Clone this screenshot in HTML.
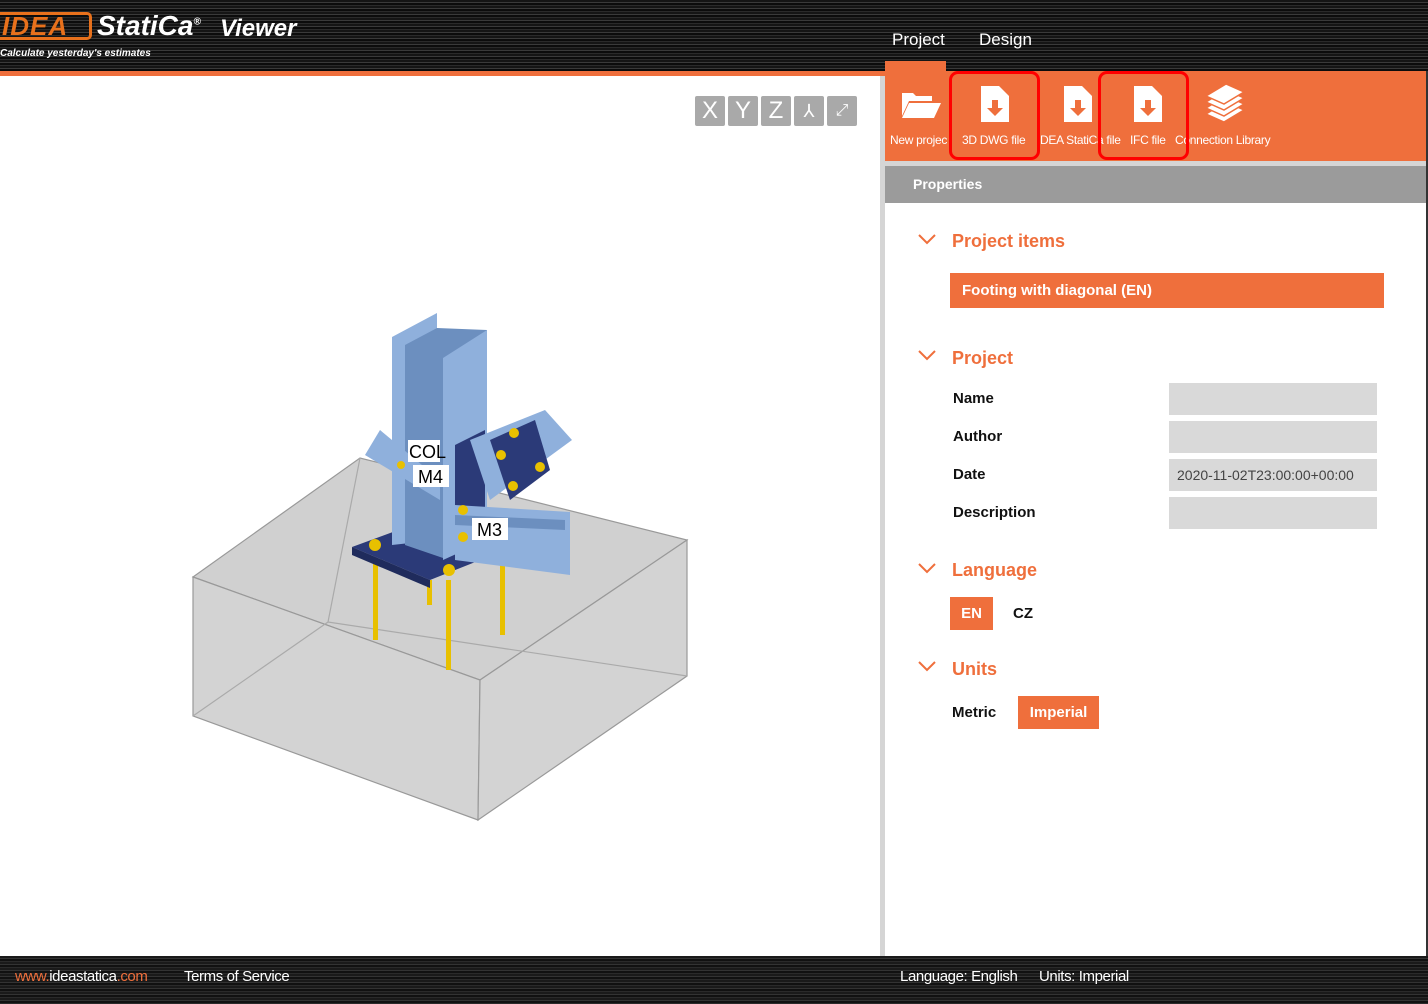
<!DOCTYPE html>
<html><head><meta charset="utf-8"><style>
*{margin:0;padding:0;box-sizing:border-box}
body{width:1428px;height:1004px;overflow:hidden;background:#fff;font-family:"Liberation Sans",sans-serif;position:relative}
.hdr{position:absolute;left:0;top:0;width:1428px;height:71px;background:repeating-linear-gradient(180deg,#151515 0 2px,#3a3a3a 2px 3px,#0c0c0c 3px 5px,#2a2a2a 5px 6px)}
.abs{position:absolute}
.o{color:#ef6f3c}
.tb{position:absolute;left:885px;top:71px;width:541px;height:90px;background:#ef6f3c}
.tl{position:absolute;top:133px;font-size:12px;color:#fff;white-space:nowrap;letter-spacing:-0.3px}
.red{position:absolute;border:3px solid #f00;border-radius:9px}
.lbl{position:absolute;font-size:15px;font-weight:bold;color:#111}
.fld{position:absolute;left:1169px;width:208px;height:32px;background:#d9d9d9;font-size:14px;color:#444;padding:8px 8px}
.sec{position:absolute;left:952px;font-size:18px;font-weight:bold;color:#ef6f3c}
.chev{position:absolute;left:918px;width:18px;height:18px}
.vb{position:absolute;top:96px;width:30px;height:30px;background:#a9a9a9;color:#fff;font-size:24px;text-align:center;line-height:30px;border-radius:2px}
</style></head><body>
<div class="hdr"></div>
<div class="abs" style="left:0;top:71px;width:885px;height:5px;background:#ef6f3c"></div>
<div class="abs" style="left:0;top:12px;width:92px;height:28px;border:3px solid #e8711c;border-left:none;border-radius:0 5px 5px 0;color:#e8711c;font-weight:bold;font-style:italic;font-size:26px;line-height:22px;padding-left:2px;letter-spacing:1px">IDEA</div>
<div class="abs" style="left:97px;top:10px;color:#fff;font-weight:bold;font-style:italic;font-size:28px">StatiCa<sup style="font-size:10px">®</sup></div>
<div class="abs" style="left:220px;top:15px;color:#fff;font-weight:bold;font-style:italic;font-size:24px">Viewer</div>
<div class="abs" style="left:0;top:48px;color:#fff;font-weight:bold;font-style:italic;font-size:10px">Calculate yesterday's estimates</div>
<div class="abs" style="left:885px;top:61px;width:61px;height:12px;background:#ef6f3c"></div>
<div class="abs" style="left:892px;top:30px;color:#fff;font-size:17px">Project</div>
<div class="abs" style="left:979px;top:30px;color:#fff;font-size:17px">Design</div>
<div class="tb"></div>
<svg class="abs" style="left:900px;top:88px" width="42" height="34" viewBox="0 0 42 34"><path d="M2 5h11l3 3h16v5H9L2 28z" fill="#fff"/><path d="M9 15h32l-7 15H2z" fill="#fff"/></svg>
<svg class="abs" style="left:979px;top:84px" width="32" height="40" viewBox="0 0 32 40"><path d="M2 2h18l10 10v26H2z" fill="#fff"/><path d="M13 16h6v8h5l-8 8-8-8h5z" fill="#ef6f3c"/></svg>
<svg class="abs" style="left:1062px;top:84px" width="32" height="40" viewBox="0 0 32 40"><path d="M2 2h18l10 10v26H2z" fill="#fff"/><path d="M13 16h6v8h5l-8 8-8-8h5z" fill="#ef6f3c"/></svg>
<svg class="abs" style="left:1132px;top:84px" width="32" height="40" viewBox="0 0 32 40"><path d="M2 2h18l10 10v26H2z" fill="#fff"/><path d="M13 16h6v8h5l-8 8-8-8h5z" fill="#ef6f3c"/></svg>
<svg class="abs" style="left:1204px;top:84px" width="42" height="42" viewBox="0 0 42 42"><g fill="#fff" stroke="#ef6f3c" stroke-width="1.5"><path d="M2 30l20-12 18 8-20 12z"/><path d="M2 24l20-12 18 8-20 12z"/><path d="M2 18l20-12 18 8-20 12z"/><path d="M2 12l20-12 18 8-20 12z"/></g></svg>
<div class="tl" style="left:890px">New projec</div>
<div class="tl" style="left:962px">3D DWG file</div>
<div class="tl" style="left:1040px">DEA StatiCa file</div>
<div class="tl" style="left:1130px">IFC file</div>
<div class="tl" style="left:1175px">Connection Library</div>
<div class="red" style="left:949px;top:71px;width:91px;height:89px"></div>
<div class="red" style="left:1098px;top:71px;width:91px;height:89px"></div>
<div class="abs" style="left:885px;top:161px;width:541px;height:5px;background:#d5d5d5"></div>
<div class="abs" style="left:885px;top:166px;width:541px;height:37px;background:#9b9b9b;color:#fff;font-weight:bold;font-size:14px;padding:10px 28px">Properties</div>
<div class="abs" style="left:880px;top:76px;width:5px;height:880px;background:#d5d5d5"></div>
<div class="abs" style="left:1426px;top:71px;width:2px;height:885px;background:#333"></div>
<svg class="chev" style="top:230px" viewBox="0 0 18 18"><path d="M1 5l8 8 8-8" fill="none" stroke="#ef6f3c" stroke-width="2"/></svg>
<div class="sec" style="top:231px">Project items</div>
<div class="abs" style="left:950px;top:273px;width:434px;height:35px;background:#ef6f3c;color:#fff;font-weight:bold;font-size:15px;padding:9px 12px">Footing with diagonal (EN)</div>
<svg class="chev" style="top:346px" viewBox="0 0 18 18"><path d="M1 5l8 8 8-8" fill="none" stroke="#ef6f3c" stroke-width="2"/></svg>
<div class="sec" style="top:348px">Project</div>
<div class="lbl" style="left:953px;top:390px">Name</div>
<div class="lbl" style="left:953px;top:428px">Author</div>
<div class="lbl" style="left:953px;top:466px">Date</div>
<div class="lbl" style="left:953px;top:504px">Description</div>
<div class="fld" style="top:383px"></div>
<div class="fld" style="top:421px"></div>
<div class="fld" style="top:459px">2020-11-02T23:00:00+00:00</div>
<div class="fld" style="top:497px"></div>
<svg class="chev" style="top:559px" viewBox="0 0 18 18"><path d="M1 5l8 8 8-8" fill="none" stroke="#ef6f3c" stroke-width="2"/></svg>
<div class="sec" style="top:560px">Language</div>
<div class="abs" style="left:950px;top:597px;width:43px;height:33px;background:#ef6f3c;color:#fff;font-weight:bold;font-size:15px;text-align:center;line-height:33px">EN</div>
<div class="lbl" style="left:1013px;top:605px">CZ</div>
<svg class="chev" style="top:657px" viewBox="0 0 18 18"><path d="M1 5l8 8 8-8" fill="none" stroke="#ef6f3c" stroke-width="2"/></svg>
<div class="sec" style="top:659px">Units</div>
<div class="lbl" style="left:952px;top:704px">Metric</div>
<div class="abs" style="left:1018px;top:696px;width:81px;height:33px;background:#ef6f3c;color:#fff;font-weight:bold;font-size:15px;text-align:center;line-height:33px">Imperial</div>
<div class="vb" style="left:695px">X</div><div class="vb" style="left:728px">Y</div><div class="vb" style="left:761px">Z</div>
<div class="vb" style="left:794px;font-size:18px">⅄</div><div class="vb" style="left:827px;font-size:16px">⤢</div>
<svg class="abs" style="left:0;top:76px" width="880" height="880" viewBox="0 76 880 880">
<g stroke="#999" stroke-width="1.2">
<path d="M193 577L360 458 687 540 480 680z" fill="#d0d0d0"/>
<path d="M193 577L480 680 478 820 193 716z" fill="#d3d3d3"/>
<path d="M480 680L687 540 687 676 478 820z" fill="#d3d3d3"/>
<path d="M193 716L328 622 687 676M328 622L360 458" fill="none" stroke="#aaa"/>
</g>
<g fill="#e8c000"><rect x="373" y="560" width="5" height="80"/><rect x="446" y="580" width="5" height="90"/><rect x="500" y="560" width="5" height="75"/><rect x="427" y="580" width="5" height="25"/></g>
<path d="M352 547L420 522 498 553 430 580z" fill="#2b3a78"/>
<path d="M352 547L430 580 430 588 352 555z" fill="#1f2b5c"/>
<path d="M392 337L437 313 437 540 392 545z" fill="#8fb0dc"/>
<path d="M405 345L437 328 487 330 487 540 443 558 405 545z" fill="#6c8fbf"/>
<path d="M443 358L487 330 487 540 443 560z" fill="#8fb0dc"/>
<path d="M455 445L485 430 485 540 455 548z" fill="#2b3a78"/>
<path d="M470 440L545 410 572 440 490 500z" fill="#8fb0dc"/>
<path d="M490 440L535 420 550 470 510 500z" fill="#2b3a78"/>
<path d="M365 455L380 430 440 480 440 500z" fill="#8fb0dc"/>
<path d="M455 505L570 512 570 575 455 560z" fill="#8fb0dc"/>
<path d="M455 515L565 520 565 530 455 525z" fill="#6c8fbf"/>
<g fill="#e8c000"><circle cx="375" cy="545" r="6"/><circle cx="449" cy="570" r="6"/><circle cx="463" cy="537" r="5"/><circle cx="463" cy="510" r="5"/><circle cx="514" cy="433" r="5"/><circle cx="540" cy="467" r="5"/><circle cx="501" cy="455" r="5"/><circle cx="513" cy="486" r="5"/><circle cx="401" cy="465" r="4"/></g>
<g font-family="Liberation Sans" font-size="18" fill="#000"><rect x="413" y="465" width="36" height="22" fill="#fff"/><text x="418" y="483">M4</text><rect x="472" y="518" width="36" height="22" fill="#fff"/><text x="477" y="536">M3</text><rect x="408" y="440" width="32" height="22" fill="#fff"/><text x="409" y="458">COL</text></g>
</svg>
<div class="abs" style="left:0;top:956px;width:1428px;height:48px;background:repeating-linear-gradient(180deg,#1a1a1a 0 2px,#333 2px 3px,#111 3px 5px,#2a2a2a 5px 6px)"></div>
<div class="abs" style="left:15px;top:968px;font-size:15px;color:#fff;letter-spacing:-0.4px"><span class="o">www.</span>ideastatica<span class="o">.com</span></div>
<div class="abs" style="left:184px;top:968px;font-size:15px;color:#fff;letter-spacing:-0.4px">Terms of Service</div>
<div class="abs" style="left:900px;top:968px;font-size:15px;color:#fff;letter-spacing:-0.4px">Language: English</div>
<div class="abs" style="left:1039px;top:968px;font-size:15px;color:#fff;letter-spacing:-0.4px">Units: Imperial</div>
</body></html>
